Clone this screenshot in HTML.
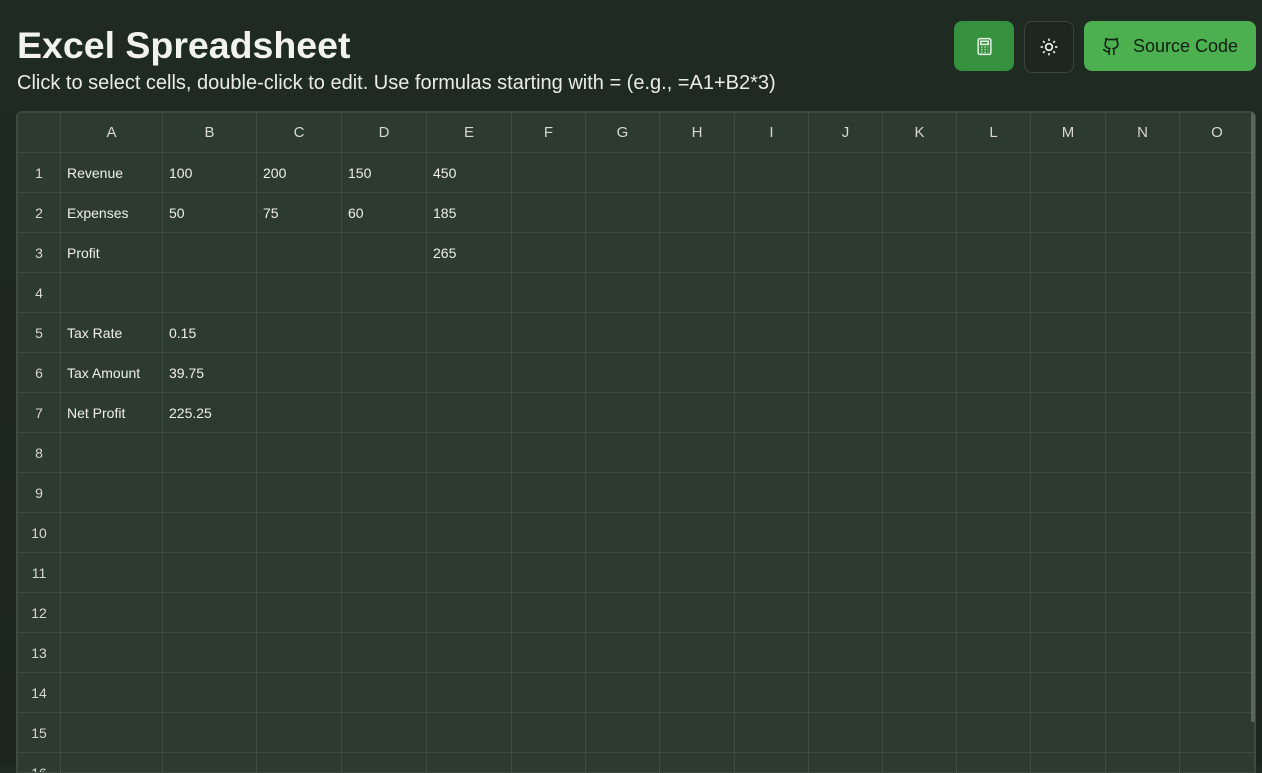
<!DOCTYPE html>
<html><head><style>
body{margin:0;width:1262px;height:765px;overflow:hidden;background:linear-gradient(180deg,#1f2a23,#1c261f);font-family:"Liberation Sans",sans-serif;color:#e6e6e0;position:relative}
h1{position:absolute;left:17px;top:24px;margin:0;font-size:37.5px;font-weight:bold;color:#f2f2ee}
.sub{position:absolute;left:17px;top:72px;font-size:20px;color:#ecece6}
.btn{position:absolute;top:21px;height:50px;border-radius:8px;display:flex;align-items:center;justify-content:center}
.wrap{position:absolute;left:16px;top:111px;width:1238px;height:660px;background:#2d3a2f;border:1px solid #3d4a3f;border-radius:6px 6px 0 0;overflow:hidden}
table{border-collapse:collapse;table-layout:fixed;font-size:14px}
td{border:1px solid #3e4c40;height:39px;padding:0 0 0 6px;color:#f0f0ea;white-space:nowrap}
tr:first-child td{text-align:center;padding:0;color:#d8d8d0;font-size:15px}
td:first-child{text-align:center;padding:0;color:#d8d8d0}
.sb{position:absolute;right:0;top:0;width:4px;height:610px;background:#5a655c}
</style></head><body>
<h1>Excel Spreadsheet</h1>
<div class="sub">Click to select cells, double-click to edit. Use formulas starting with = (e.g., =A1+B2*3)</div>
<div class="btn" style="left:954px;width:60px;background:#35913d"><svg width="19" height="19" viewBox="0 0 18 18" fill="none" stroke="#e8f3e8" stroke-width="1.4"><rect x="3" y="1.5" width="12" height="15" rx="1.5"/><rect x="5.5" y="4" width="7" height="3"/><path d="M6 9.5h1M9 9.5h1M12 9.5h.5M6 12h1M9 12h1M12 12h.5M6 14.5h1M9 14.5h1M12 14.5h.5"/></svg></div>
<div class="btn" style="left:1024px;width:48px;border:1px solid #3a463d;background:#1d2720"><svg width="20" height="20" viewBox="0 0 18 18" fill="none" stroke="#eee" stroke-width="1.5"><circle cx="9" cy="9" r="3"/><path d="M9 1.5v2M9 14.5v2M1.5 9h2M14.5 9h2M3.7 3.7l1.4 1.4M12.9 12.9l1.4 1.4M3.7 14.3l1.4-1.4M12.9 5.1l1.4-1.4"/></svg></div>
<div class="btn" style="left:1084px;width:172px;background:#4caf50;color:#10200f;font-size:18px;gap:12px"><svg width="19" height="19" viewBox="0 0 24 24" fill="none" stroke="#10200f" stroke-width="2" stroke-linecap="round" stroke-linejoin="round"><path d="M15 22v-4a4.8 4.8 0 0 0-1-3.5c3 0 6-2 6-5.5.08-1.25-.27-2.48-1-3.5.28-1.15.28-2.35 0-3.5 0 0-1 0-3 1.5-2.64-.5-5.36-.5-8 0C6 2 5 2 5 2c-.3 1.15-.3 2.35 0 3.5A5.4 5.4 0 0 0 4 9c0 3.5 3 5.5 6 5.5-.39.49-.68 1.050-.85 1.65S8.93 17.38 9 18v4"/><path d="M9 18c-4.51 2-5-2-7-2"/></svg>Source Code</div>
<div class="wrap"><table>
<colgroup><col style="width:43px"><col style="width:102px"><col style="width:94px"><col style="width:85px"><col style="width:85px"><col style="width:85px"><col style="width:74px"><col style="width:74px"><col style="width:75px"><col style="width:74px"><col style="width:74px"><col style="width:74px"><col style="width:74px"><col style="width:75px"><col style="width:74px"><col style="width:75px"></colgroup>
<tr><td></td><td>A</td><td>B</td><td>C</td><td>D</td><td>E</td><td>F</td><td>G</td><td>H</td><td>I</td><td>J</td><td>K</td><td>L</td><td>M</td><td>N</td><td>O</td></tr>
<tr><td>1</td><td>Revenue</td><td>100</td><td>200</td><td>150</td><td>450</td><td></td><td></td><td></td><td></td><td></td><td></td><td></td><td></td><td></td><td></td></tr>
<tr><td>2</td><td>Expenses</td><td>50</td><td>75</td><td>60</td><td>185</td><td></td><td></td><td></td><td></td><td></td><td></td><td></td><td></td><td></td><td></td></tr>
<tr><td>3</td><td>Profit</td><td></td><td></td><td></td><td>265</td><td></td><td></td><td></td><td></td><td></td><td></td><td></td><td></td><td></td><td></td></tr>
<tr><td>4</td><td></td><td></td><td></td><td></td><td></td><td></td><td></td><td></td><td></td><td></td><td></td><td></td><td></td><td></td><td></td></tr>
<tr><td>5</td><td>Tax Rate</td><td>0.15</td><td></td><td></td><td></td><td></td><td></td><td></td><td></td><td></td><td></td><td></td><td></td><td></td><td></td></tr>
<tr><td>6</td><td>Tax Amount</td><td>39.75</td><td></td><td></td><td></td><td></td><td></td><td></td><td></td><td></td><td></td><td></td><td></td><td></td><td></td></tr>
<tr><td>7</td><td>Net Profit</td><td>225.25</td><td></td><td></td><td></td><td></td><td></td><td></td><td></td><td></td><td></td><td></td><td></td><td></td><td></td></tr>
<tr><td>8</td><td></td><td></td><td></td><td></td><td></td><td></td><td></td><td></td><td></td><td></td><td></td><td></td><td></td><td></td><td></td></tr>
<tr><td>9</td><td></td><td></td><td></td><td></td><td></td><td></td><td></td><td></td><td></td><td></td><td></td><td></td><td></td><td></td><td></td></tr>
<tr><td>10</td><td></td><td></td><td></td><td></td><td></td><td></td><td></td><td></td><td></td><td></td><td></td><td></td><td></td><td></td><td></td></tr>
<tr><td>11</td><td></td><td></td><td></td><td></td><td></td><td></td><td></td><td></td><td></td><td></td><td></td><td></td><td></td><td></td><td></td></tr>
<tr><td>12</td><td></td><td></td><td></td><td></td><td></td><td></td><td></td><td></td><td></td><td></td><td></td><td></td><td></td><td></td><td></td></tr>
<tr><td>13</td><td></td><td></td><td></td><td></td><td></td><td></td><td></td><td></td><td></td><td></td><td></td><td></td><td></td><td></td><td></td></tr>
<tr><td>14</td><td></td><td></td><td></td><td></td><td></td><td></td><td></td><td></td><td></td><td></td><td></td><td></td><td></td><td></td><td></td></tr>
<tr><td>15</td><td></td><td></td><td></td><td></td><td></td><td></td><td></td><td></td><td></td><td></td><td></td><td></td><td></td><td></td><td></td></tr>
<tr><td>16</td><td></td><td></td><td></td><td></td><td></td><td></td><td></td><td></td><td></td><td></td><td></td><td></td><td></td><td></td><td></td></tr>
</table><div class="sb"></div></div>
</body></html>
